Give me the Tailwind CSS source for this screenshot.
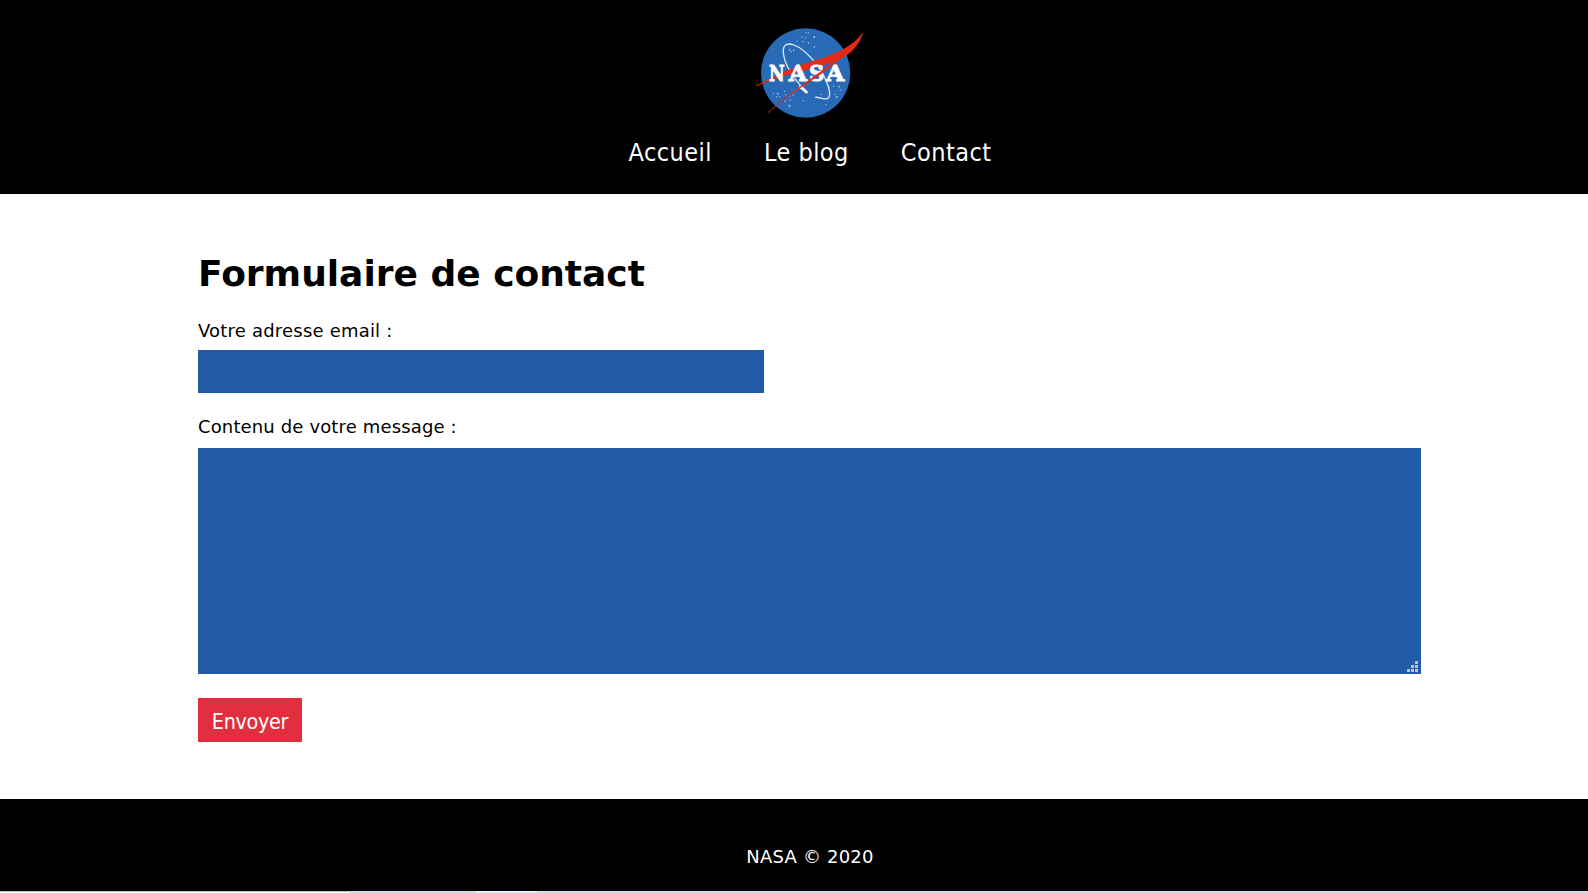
<!DOCTYPE html>
<html lang="fr">
<head>
<meta charset="utf-8">
<title>NASA - Contact</title>
<script src="https://cdn.jsdelivr.net/npm/@tailwindcss/browser@4"></script>
</head>
<body class="h-[893px] overflow-hidden bg-white font-['Verdana','DejaVu_Sans',sans-serif] text-black">
<header class="h-[194px] bg-black pl-[198px] pt-[15px] text-white">
  <div class="flex w-[1224px] flex-col items-center">
    <svg class="h-[110px] w-[130px]" viewBox="0 0 390 330">
      <circle cx="182" cy="174" r="134" fill="#286ab6"/>
      <g fill="#a9c6e8">
        <circle cx="183" cy="52" r="2"/><circle cx="190" cy="54" r="2"/><circle cx="208" cy="66" r="3"/><circle cx="171" cy="66" r="2"/><circle cx="181" cy="68" r="2"/><circle cx="157" cy="79" r="2"/><circle cx="174" cy="80" r="2"/><circle cx="191" cy="84" r="2"/><circle cx="208" cy="96" r="2.5"/><circle cx="134" cy="104" r="2.5"/><circle cx="146" cy="106" r="2.5"/><circle cx="139" cy="110" r="2"/>
        <circle cx="85" cy="235" r="2"/><circle cx="98" cy="236" r="2.5"/><circle cx="95" cy="246" r="2"/><circle cx="104" cy="244" r="2"/><circle cx="119" cy="229" r="2"/><circle cx="122" cy="239" r="2"/><circle cx="134" cy="243" r="2"/><circle cx="136" cy="255" r="2"/><circle cx="120" cy="258" r="2"/><circle cx="133" cy="272" r="3"/><circle cx="175" cy="257" r="2"/><circle cx="144" cy="240" r="2"/>
        <circle cx="266" cy="213" r="2"/><circle cx="282" cy="215" r="2.5"/><circle cx="286" cy="225" r="2"/><circle cx="253" cy="217" r="2"/><circle cx="270" cy="238" r="2"/><circle cx="275" cy="246" r="3"/><circle cx="243" cy="269" r="2"/><circle cx="228" cy="238" r="2"/><circle cx="211" cy="247" r="2"/>
      </g>
      <path d="M183 231C145 190 117 146 115 112C113 91 126 82 147 90C181 103 225 152 244 199C260 239 257 256 234 251L212 246" fill="none" stroke="#dce9f7" stroke-width="4"/>
      <path d="M166 215L184 231" stroke="#fff" stroke-width="9" stroke-linecap="round"/>
      <path d="M34 213C93 181 151 154 213 136C272 119 326 93 353 55C341 90 318 117 284 132C245 149 191 162 145 174C106 185 69 198 34 213Z" fill="#e42b16" stroke="#e42b16" stroke-width="2"/>
      <g font-family="DejaVu Serif" font-weight="700" font-size="67" fill="#fff" stroke="#fff" stroke-width="2.5">
        <text x="72" y="198" textLength="47" lengthAdjust="spacingAndGlyphs">N</text>
        <text x="131" y="198" textLength="55" lengthAdjust="spacingAndGlyphs">A</text>
        <text x="192" y="198" textLength="46" lengthAdjust="spacingAndGlyphs">S</text>
        <text x="243" y="198" textLength="55" lengthAdjust="spacingAndGlyphs">A</text>
      </g>
      <path d="M69 293C136 231 219 178 290 123L308 106C270 151 214 187 166 218C128 244 97 268 69 293Z" fill="#e42b16" stroke="#e42b16" stroke-width="1.5"/>
    </svg>
    <nav class="mt-[10px] flex h-[36px] w-[363px] justify-between font-['DejaVu_Sans_Condensed','DejaVu_Sans',sans-serif] text-[25px] leading-[36px] tracking-[0.45px]">
      <a>Accueil</a><a>Le blog</a><a>Contact</a>
    </nav>
  </div>
</header>
<main class="flex h-[605px] w-[1421px] flex-col items-start pl-[198px] pt-[55px]">
  <h1 class="h-[50px] whitespace-nowrap text-[36px] leading-[50px] font-bold">Formulaire de contact</h1>
  <label for="email" class="mt-[19px] h-[26px] whitespace-nowrap text-[18px] leading-[26px] tracking-[0.2px]">Votre adresse email :</label>
  <input id="email" class="mt-[6px] h-[43px] w-[566px] bg-[#215aa6] outline-none">
  <label for="message" class="mt-[21px] h-[26px] whitespace-nowrap text-[18px] leading-[26px] tracking-[0.14px]">Contenu de votre message :</label>
  <div class="relative mt-[8px] h-[226px] w-[1223px]">
    <textarea id="message" class="block h-full w-full resize-none bg-[#215aa6] outline-none"></textarea>
    <svg class="absolute right-[3px] bottom-[2px] h-[11px] w-[11px]" viewBox="0 0 11 11" fill="#c3c3c7" shape-rendering="crispEdges"><path d="M8 0h3v3h-3zM4 4h3v3h-3zM8 4h3v3h-3zM0 8h3v3h-3zM4 8h3v3h-3zM8 8h3v3h-3z"/></svg>
  </div>
  <button class="mt-[24px] h-[44px] w-[104px] bg-[#e22e3e] pt-[4px] font-['DejaVu_Sans_Condensed','DejaVu_Sans',sans-serif] text-[21.33px] tracking-[-0.3px] text-white">Envoyer</button>
</main>
<footer class="h-[92px] bg-black pl-[198px] pt-[45px] text-white">
  <p class="w-[1224px] text-center text-[18px] leading-[26px] tracking-[0.2px]">NASA © 2020</p>
</footer>
<div class="flex h-[2px] bg-[#d7d6e5]"><div class="w-[349px] border-t border-[#bbb] bg-white"></div><div class="ml-[127px] w-[61px] bg-[#efeef5]"></div></div>
</body>
</html>
